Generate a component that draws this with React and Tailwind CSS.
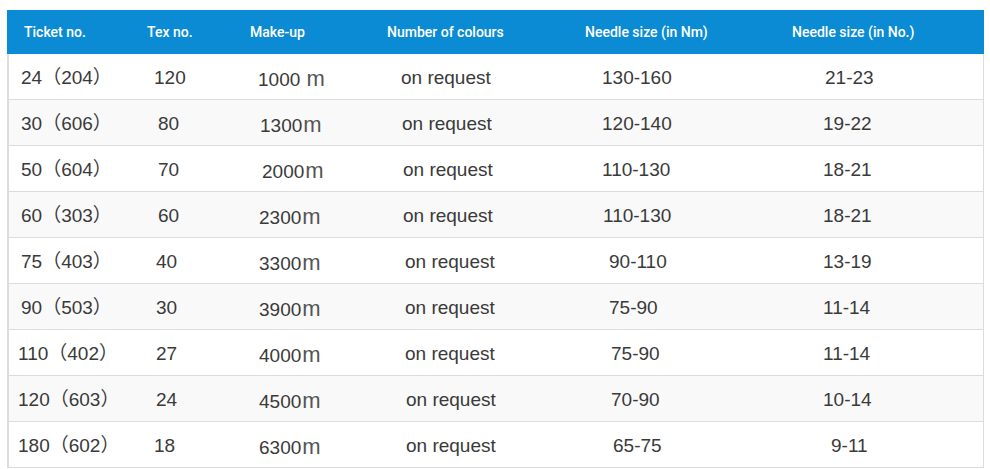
import React from "react";

const headers = [
  { label: "Ticket no.", cls: "pl-[17px]" },
  { label: "Tex no.", cls: "pl-[8px]" },
  { label: "Make-up", cls: "pl-[11px]" },
  { label: "Number of colours", cls: "pl-[18px]" },
  { label: "Needle size (in Nm)", cls: "pl-[26px]" },
  { label: "Needle size (in No.)", cls: "pl-[33px]" },
];

// offsets copied from the reference, which is a little uneven
const rows = [
  { t: "24（204）", tx: "120", m: "1000", nm: "130-160", no: "21-23", p: ["pl-[12px]", "pl-[13px]", "pl-[17px]", "pl-[30px]", "pl-[41px]", "pl-[64px]"] },
  { t: "30（606）", tx: "80", m: "1300", nm: "120-140", no: "19-22", p: ["pl-[12px]", "pl-[17px]", "pl-[19px]", "pl-[31px]", "pl-[41px]", "pl-[62px]"] },
  { t: "50（604）", tx: "70", m: "2000", nm: "110-130", no: "18-21", p: ["pl-[12px]", "pl-[17px]", "pl-[21px]", "pl-[32px]", "pl-[41px]", "pl-[62px]"] },
  { t: "60（303）", tx: "60", m: "2300", nm: "110-130", no: "18-21", p: ["pl-[12px]", "pl-[17px]", "pl-[18px]", "pl-[32px]", "pl-[42px]", "pl-[62px]"] },
  { t: "75（403）", tx: "40", m: "3300", nm: "90-110", no: "13-19", p: ["pl-[12px]", "pl-[15px]", "pl-[18px]", "pl-[34px]", "pl-[48px]", "pl-[62px]"] },
  { t: "90（503）", tx: "30", m: "3900", nm: "75-90", no: "11-14", p: ["pl-[12px]", "pl-[15px]", "pl-[18px]", "pl-[34px]", "pl-[48px]", "pl-[62px]"] },
  { t: "110（402）", tx: "27", m: "4000", nm: "75-90", no: "11-14", p: ["pl-[9px]", "pl-[15px]", "pl-[18px]", "pl-[34px]", "pl-[50px]", "pl-[62px]"] },
  { t: "120（603）", tx: "24", m: "4500", nm: "70-90", no: "10-14", p: ["pl-[9px]", "pl-[15px]", "pl-[18px]", "pl-[35px]", "pl-[50px]", "pl-[62px]"] },
  { t: "180（602）", tx: "18", m: "6300", nm: "65-75", no: "9-11", p: ["pl-[9px]", "pl-[13px]", "pl-[18px]", "pl-[35px]", "pl-[52px]", "pl-[70px]"] },
];

const cols = "grid grid-cols-[132px_100px_130px_190px_200px_1fr]";

const App = () => {
  return (
    <div className="w-[990px] h-[469px] bg-white pt-[10px] pl-[7px] overflow-hidden">
      <div className="w-[977px]">
        {/* Header */}
        <div className={`${cols} h-[44px] items-center bg-[#0a8bd4] text-white text-[14px] font-medium font-['Roboto',sans-serif]`}>
          {headers.map((h) => (
            <div key={h.label} className={h.cls}>
              {h.label}
            </div>
          ))}
        </div>

        {/* Rows */}
        <div className="border-l-2 border-r border-[#dcdcdc] text-[19px] text-[#3a3a3a] font-['Liberation_Sans','Noto_Sans_CJK_SC',sans-serif]">
          {rows.map((r, i) => (
            <div
              key={r.t}
              className={`${cols} h-[46px] items-center pt-[3px] border-b border-[#dcdcdc] ${i % 2 === 1 ? "bg-[#f9f9f9]" : "bg-white"}`}
            >
              <div className={r.p[0]}>{r.t}</div>
              <div className={r.p[1]}>{r.tx}</div>
              <div className={r.p[2]}>
                {r.m}
                {i === 0 ? " " : ""}
                <span className="text-[22px] text-[#555] ml-[1px]">m</span>
              </div>
              <div className={r.p[3]}>on request</div>
              <div className={r.p[4]}>{r.nm}</div>
              <div className={r.p[5]}>{r.no}</div>
            </div>
          ))}
        </div>
      </div>
    </div>
  );
};

export default App;
